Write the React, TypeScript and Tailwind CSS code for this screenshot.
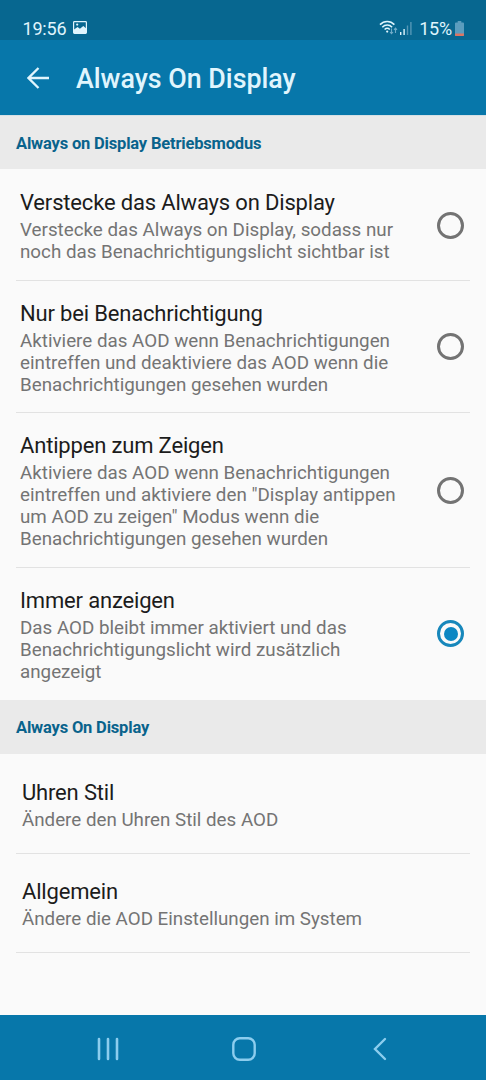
import React from "react";
import clsx from "clsx";

const modes = [
    {
        title: "Verstecke das Always on Display",
        lines: ["Verstecke das Always on Display, sodass nur", "noch das Benachrichtigungslicht sichtbar ist"],
    },
    {
        title: "Nur bei Benachrichtigung",
        lines: ["Aktiviere das AOD wenn Benachrichtigungen", "eintreffen und deaktiviere das AOD wenn die", "Benachrichtigungen gesehen wurden"],
    },
    {
        title: "Antippen zum Zeigen",
        lines: ["Aktiviere das AOD wenn Benachrichtigungen", "eintreffen und aktiviere den \"Display antippen", "um AOD zu zeigen\" Modus wenn die", "Benachrichtigungen gesehen wurden"],
    },
    {
        title: "Immer anzeigen",
        lines: ["Das AOD bleibt immer aktiviert und das", "Benachrichtigungslicht wird zusätzlich", "angezeigt"],
        selected: true,
    },
];

const links = [
    { title: "Uhren Stil", text: "Ändere den Uhren Stil des AOD" },
    { title: "Allgemein", text: "Ändere die AOD Einstellungen im System" },
];

function StatusBar() {
    return (
        <div className="h-10 shrink-0 bg-[#076790] text-[#e0f5fd] flex items-start justify-between pt-[18px] pl-[22.5px] pr-[22px]">
            <div className="flex items-center gap-[7px]">
                <span className="text-[18px] leading-[22px] tracking-[-0.2px]">19:56</span>
                <svg width="14" height="13" viewBox="0 0 14 13" className="-mt-[3px]">
                    <rect x="0.6" y="0.6" width="12.8" height="11.8" rx="0.8" fill="none" stroke="currentColor" strokeWidth="1.2" />
                    <path d="M1 8.4 4.6 6l2.3 1.7L10.3 5 13 7.2V12H1z" fill="currentColor" />
                    <circle cx="4.2" cy="3.6" r="1.1" fill="currentColor" />
                </svg>
            </div>
            <div className="flex items-center">
                <svg width="19" height="15" viewBox="0 0 19 15" fill="none" stroke="currentColor" className="-mt-[3px] mr-[2px]">
                    <path d="M1 4.6c4-4.2 10.4-4.2 14.4 0M3.3 7.2c2.8-2.9 7-2.9 9.8 0M5.6 9.5c1.6-1.5 3.6-1.5 5.2 0" strokeWidth="1.6" />
                    <circle cx="8.2" cy="11.6" r="1.1" fill="currentColor" stroke="none" />
                    <path d="M12.5 8.5v5M11 12l1.5 1.7L14 12M16.5 13V8.3M15 9.9l1.5-1.7L18 9.9" stroke="#70abc8" strokeWidth="1.1" />
                </svg>
                <svg width="12" height="13" viewBox="0 0 12 13" className="mr-[7px] -mt-px">
                    <rect x="0" y="10" width="1.4" height="3" fill="currentColor" />
                    <rect x="3.4" y="7" width="1.4" height="6" fill="currentColor" />
                    <rect x="6.8" y="3.5" width="1.4" height="9.5" fill="#5597b6" />
                    <rect x="10.2" y="0" width="1.4" height="13" fill="#5597b6" />
                </svg>
                <span className="text-[18px] leading-[22px] tracking-[-0.2px]">15%</span>
                <svg width="9" height="15" viewBox="0 0 10 15" preserveAspectRatio="none" className="-mt-[2px] ml-[3px]">
                    <path d="M3 0h4v1.5h2a1 1 0 0 1 1 1V14a1 1 0 0 1-1 1H1a1 1 0 0 1-1-1V2.5a1 1 0 0 1 1-1h2z" fill="#5b9dbe" />
                    <path d="M0 12.5h10V14a1 1 0 0 1-1 1H1a1 1 0 0 1-1-1z" fill="#dc7563" />
                </svg>
            </div>
        </div>
    );
}

function SectionHeader({ children, className }: { children: React.ReactNode; className?: string }) {
    return (
        <h2 className={clsx("h-[54px] shrink-0 bg-[#eaeaea] px-4 flex items-center text-[16.5px] tracking-[-0.18px] font-bold text-[#09638c]", className)}>
            {children}
        </h2>
    );
}

function Radio({ selected }: { selected?: boolean }) {
    return (
        <span className={clsx("w-[27px] h-[27px] shrink-0 rounded-full border-3 flex items-center justify-center -mt-[2px]", selected ? "border-[#1787bb]" : "border-[#737373]")}>
            {selected && <span className="w-[14px] h-[14px] rounded-full bg-[#0c87c3]" />}
        </span>
    );
}

export default function App() {
    return (
        <div className="w-full h-[1080px] bg-[#fafafa] flex flex-col overflow-hidden font-['Roboto',sans-serif] whitespace-nowrap">
            <StatusBar />

            {/* Toolbar */}
            <header className="h-[75px] shrink-0 bg-[#0777aa] text-[#e0f5fd] flex items-center pl-[27px]">
                <svg width="22" height="22" viewBox="0 0 22 22" fill="none" stroke="currentColor" strokeWidth="2.3">
                    <path d="M22 11H1.5M11.5 1 1.5 11l10 10" />
                </svg>
                <h1 className="ml-[27px] pt-[3px] text-[26.8px] font-medium">Always On Display</h1>
            </header>

            <SectionHeader className="border-t border-[#d5e0e5] pt-[3px]">Always on Display Betriebsmodus</SectionHeader>

            {/* Mode selection */}
            <div className="px-4 pt-px pb-px">
                {modes.map((mode, i) => (
                    <div key={mode.title} className={clsx("flex items-center justify-between pl-1 pr-[6px] pt-[19px] pb-[16.5px]", i < modes.length - 1 && "border-b border-[#e2e2e2]")}>
                        <div>
                            <div className="text-[22px] tracking-[-0.17px] leading-[27.5px] text-[#1c1c1c]">{mode.title}</div>
                            <div className="mt-[2.5px] text-[18.8px] leading-[22px] text-[#747474]">
                                {mode.lines.map((line) => (
                                    <div key={line}>{line}</div>
                                ))}
                            </div>
                        </div>
                        <Radio selected={mode.selected} />
                    </div>
                ))}
            </div>

            <SectionHeader className="pt-[2px]">Always On Display</SectionHeader>

            <div className="px-4 pt-px">
                {links.map((link) => (
                    <div key={link.title} className="h-[99px] pl-[6px] pt-6 border-b border-[#e2e2e2]">
                        <div className="text-[22px] tracking-[-0.17px] leading-[28px] text-[#1c1c1c]">{link.title}</div>
                        <div className="text-[18.75px] leading-[26px] text-[#747474]">{link.text}</div>
                    </div>
                ))}
            </div>

            {/* Android navigation */}
            <nav className="mt-auto h-[65px] shrink-0 bg-[#0777aa] text-[#8ccdee] flex items-center justify-between pl-[97px] pr-[99px] pt-[3px]">
                <svg width="22" height="24" viewBox="0 0 22 24" fill="none" stroke="currentColor" strokeWidth="2.6" strokeLinecap="round">
                    <path d="M2 2v20M11 2v20M20 2v20" />
                </svg>
                <svg width="24" height="24" viewBox="0 0 24 24" fill="none" stroke="currentColor" strokeWidth="2.4" className="-ml-1">
                    <rect x="1.3" y="1.3" width="21.4" height="21.4" rx="6.5" />
                </svg>
                <svg width="14" height="24" viewBox="0 0 14 24" fill="none" stroke="currentColor" strokeWidth="2.4" strokeLinecap="round">
                    <path d="M12 2 2 12l10 10" />
                </svg>
            </nav>
        </div>
    );
}
